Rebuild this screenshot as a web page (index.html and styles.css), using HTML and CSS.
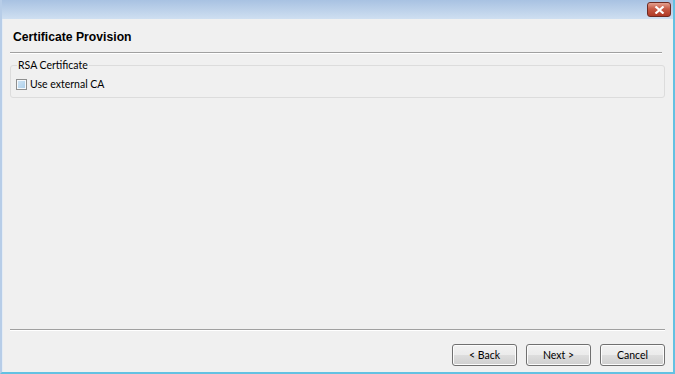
FILE: index.html
```html
<!DOCTYPE html>
<html lang="en">

<head>
    <meta charset="UTF-8">
    <title>Certificate Provision</title>
    <link rel="stylesheet" href="styles.css">
</head>

<body>
    <div class="window">
        <div class="titlebar">
            <button class="close-btn" aria-label="Close">
                <svg width="11" height="8" viewBox="0 0 11 8">
                    <path d="M1.5 0.5 L9.5 7.5 M9.5 0.5 L1.5 7.5" stroke="#fff" stroke-width="2.2" />
                </svg>
            </button>
        </div>
        <div class="content">
            <h1 class="page-title">Certificate Provision</h1>
            <hr class="sep">
            <fieldset class="group">
                <legend>RSA Certificate</legend>
                <label class="check">
                    <span class="box"></span>
                    Use external CA
                </label>
            </fieldset>
            <div class="spacer"></div>
            <hr class="sep sep-bottom">
            <div class="btn-row">
                <button class="btn">&lt; Back</button>
                <button class="btn">Next &gt;</button>
                <button class="btn">Cancel</button>
            </div>
        </div>
    </div>
</body>

</html>
```

FILE: styles.css
```css
* {
    box-sizing: border-box;
    margin: 0;
    padding: 0;
}

body {
    font-family: Lato, 'Liberation Sans', Arial, sans-serif;
    font-size: 10.5px;
    color: #000;
    background: #f0f0f0;
}

.window {
    width: 675px;
    height: 374px;
    display: flex;
    flex-direction: column;
    border-left: 2px solid #b7cde8;
    border-right: 2px solid #63c1e2;
    border-bottom: 2px solid #63c1e2;
    background: #f0f0f0;
}

.titlebar {
    height: 19px;
    background: linear-gradient(to bottom, #a8c2e2, #cfdff1);
    display: flex;
    justify-content: flex-end;
    align-items: flex-start;
    padding: 2px 2px 0 0;
    flex-shrink: 0;
}

.close-btn {
    width: 24px;
    height: 15px;
    border: 1px solid #6d2a22;
    border-radius: 3px;
    background: linear-gradient(to bottom, #e3a08f, #c75a45 45%, #b03a26);
    display: flex;
    align-items: center;
    justify-content: center;
}

.content {
    flex: 1;
    display: flex;
    flex-direction: column;
    padding: 10px 8px 6px 7px;
    border-left: 1px solid #e4ecf5;
}

.page-title {
    font-family: 'Liberation Sans', Arial, sans-serif;
    font-size: 12.2px;
    font-weight: bold;
    padding-left: 3px;
    line-height: 16px;
}

.sep {
    border: none;
    border-top: 1px solid #a0a0a0;
    border-bottom: 1px solid #fff;
    margin: 7px 3px 0 0;
}

.group {
    margin-top: 5px;
    border: 1px solid #dcdcdc;
    border-radius: 3px;
    padding: 7px 6px 0 5px;
    height: 39px;
}

.group legend {
    padding: 0 1px;
    margin-left: 1px;
    line-height: 12px;
}

.check {
    display: flex;
    align-items: center;
    gap: 3px;
    line-height: 13px;
    padding-left: 0;
}

.box {
    width: 11px;
    height: 11px;
    border: 1px solid #8e8f8f;
    background: linear-gradient(135deg, #d2e6f6, #a9cde9);
    box-shadow: inset 0 0 0 1px #f4f8fc;
}

.spacer {
    flex: 1;
}

.sep-bottom {
    margin: 0 0 13px 0;
}

.btn-row {
    display: flex;
    justify-content: flex-end;
    gap: 9px;
    padding-right: 0;
}

.btn {
    width: 65px;
    height: 22px;
    font-family: Lato, 'Liberation Sans', Arial, sans-serif;
    font-size: 10.5px;
    border: 1px solid #707070;
    border-radius: 3px;
    background: linear-gradient(to bottom, #f2f2f2 0%, #ebebeb 50%, #dddddd 51%, #cfcfcf 100%);
    box-shadow: inset 0 0 0 1px #fcfcfc;
    color: #000;
}
```
